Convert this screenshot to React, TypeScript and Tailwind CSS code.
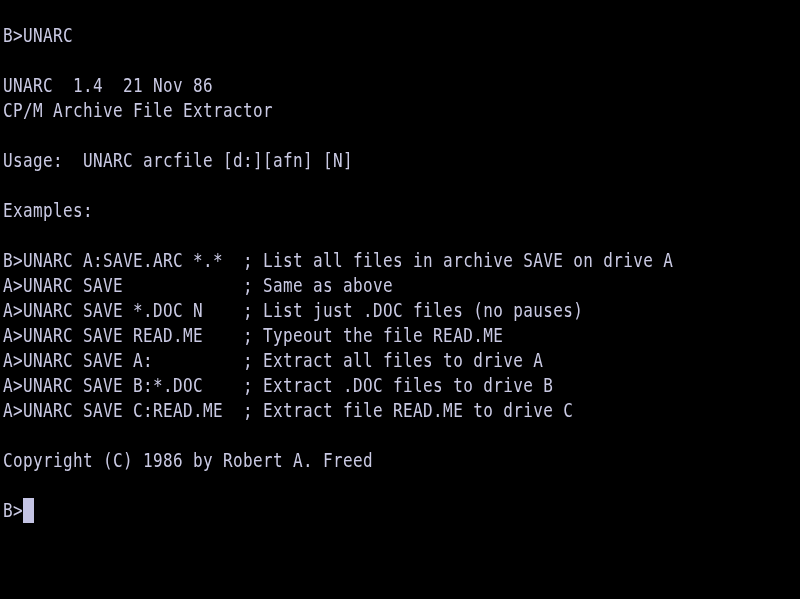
const lines = [
  "B>UNARC",
  "",
  "UNARC  1.4  21 Nov 86",
  "CP/M Archive File Extractor",
  "",
  "Usage:  UNARC arcfile [d:][afn] [N]",
  "",
  "Examples:",
  "",
  "B>UNARC A:SAVE.ARC *.*  ; List all files in archive SAVE on drive A",
  "A>UNARC SAVE            ; Same as above",
  "A>UNARC SAVE *.DOC N    ; List just .DOC files (no pauses)",
  "A>UNARC SAVE READ.ME    ; Typeout the file READ.ME",
  "A>UNARC SAVE A:         ; Extract all files to drive A",
  "A>UNARC SAVE B:*.DOC    ; Extract .DOC files to drive B",
  "A>UNARC SAVE C:READ.ME  ; Extract file READ.ME to drive C",
  "",
  "Copyright (C) 1986 by Robert A. Freed",
  "",
];

export default function App() {
  return (
    <div className="w-[800px] h-[599px] bg-black overflow-hidden pt-[23px] pl-[3px] text-[#cacae4] font-['DejaVu_Sans_Mono',monospace] text-[16px] tracking-[0.37px] leading-[25px] blur-[0.4px]">
      {lines.map((line, i) => (
        <div key={i} className="h-[25px] whitespace-pre">
          <span className="inline-block scale-y-[1.2]">{line}</span>
        </div>
      ))}
      <div className="h-[25px] whitespace-pre flex items-center">
        <span className="inline-block scale-y-[1.2]">B&gt;</span>
        <span className="inline-block w-[11px] h-[25px] bg-[#c4c4e4]" />
      </div>
    </div>
  );
}
